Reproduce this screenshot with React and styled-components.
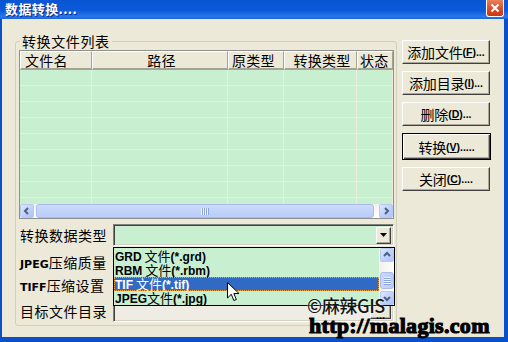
import React from 'react'
import styled, { createGlobalStyle, css } from 'styled-components'

// --------------- globals -------------------
const GlobalStyle = createGlobalStyle`
  html, body { margin: 0; padding: 0; }
  body {
    width: 508px;
    height: 342px;
    overflow: hidden;
    background: #0B50CE;
    font-family: "Noto Sans CJK SC", "Liberation Sans", sans-serif;
  }
  * { box-sizing: border-box; }
`

const COLS = '72px 136px 56px 73px 1fr'

// --------------- window frame -------------------
const Win = styled.div`
  position: relative;
  width: 508px;
  height: 342px;
  display: flex;
  flex-direction: column;
  background: #0B4FCB;
`

const TitleBar = styled.div`
  height: 19px;
  flex: none;
  display: flex;
  justify-content: space-between;
  align-items: flex-start;
  padding: 0 4px 0 5px;
  background: linear-gradient(to bottom, #0A55D4 0%, #0B5ADA 55%, #2B77E8 88%, #1862E0 100%);
`

const Title = styled.div`
  color: #fff;
  font-size: 13px;
  font-weight: bold;
  line-height: 18px;
  letter-spacing: 0.4px;
  text-shadow: 1px 1px 0 #0A2A8C;
`

const CloseBtn = styled.div`
  width: 18px;
  height: 17px;
  border: 1px solid #fff;
  border-top: none;
  border-radius: 0 0 3px 3px;
  background: linear-gradient(to bottom, #EA815F, #D9491F 60%, #C93A14);
  display: flex;
  align-items: center;
  justify-content: center;
`

const Frame = styled.div`
  flex: 1;
  display: flex;
  padding: 0 4px 5px 2px;
`

const Client = styled.div`
  flex: 1;
  background: #ECE9D8;
  display: grid;
  grid-template-columns: 382px 90px;
  column-gap: 5px;
  align-items: start;
  padding: 14px 0 0 13px;
`

// --------------- group box -------------------
const GroupBox = styled.div`
  position: relative;
  margin-top: 8px;
  height: 285px;
  border: 1px solid #D0D0BF;
  border-radius: 3px;
  padding: 8px 2px 0 3px;
`

const Legend = styled.span`
  position: absolute;
  top: -10px;
  left: 4px;
  padding: 0 2px;
  background: #ECE9D8;
  font-size: 14px;
  line-height: 18px;
  letter-spacing: 0.6px;
  color: #000;
`

// --------------- list view -------------------
const ListView = styled.div`
  height: 169px;
  border: 1px solid #8E8F8F;
  display: flex;
  flex-direction: column;
  background: #C8F0D0;
`

const HeaderRow = styled.div`
  display: grid;
  grid-template-columns: ${COLS};
  height: 19px;
  flex: none;
`

const HeaderCell = styled.div`
  background: #ECE9D8;
  border-top: 1px solid #fff;
  border-left: 1px solid #fff;
  border-right: 1px solid #A5A294;
  border-bottom: 2px solid #A5A294;
  font-size: 14px;
  line-height: 16px;
  letter-spacing: 0.3px;
  padding-left: ${p => p.$pad || 3}px;
  text-align: ${p => p.$center ? 'center' : 'left'};
  white-space: nowrap;
`

const Body = styled.div`
  flex: 1;
  overflow: hidden;
`

const Row = styled.div`
  display: grid;
  grid-template-columns: ${COLS};
  height: 16px;
`

const Cell = styled.div`
  border-right: 1px solid #EEECDC;
  border-bottom: 1px solid #EEECDC;
`

// --------------- xp scrollbars -------------------
const HScroll = styled.div`
  height: 14px;
  flex: none;
  display: flex;
  background: linear-gradient(to bottom, #F3F1EC, #FEFEFB);
`

const VScroll = styled.div`
  width: 15px;
  display: flex;
  flex-direction: column;
  background: linear-gradient(to right, #F3F1EC, #FEFEFB);
  border-left: 1px solid #F5F4EC;
`

const ArrowBtn = styled.div`
  width: 14px;
  height: 14px;
  flex: none;
  margin-top: ${p => p.$end ? 'auto' : '0'};
  border: 1px solid #B7C9F5;
  border-radius: 2px;
  background: linear-gradient(135deg, #DDE7FE, #BCCFFA 60%, #AFC4F6);
  display: flex;
  align-items: center;
  justify-content: center;
`

const Thumb = styled.div`
  flex: ${p => p.$vertical ? 'none' : '1'};
  height: ${p => p.$vertical ? '17px' : 'auto'};
  margin: ${p => p.$vertical ? '10px 0 0 0' : '0 5px 0 2px'};
  border: 1px solid #A9BCEC;
  border-radius: 3px;
  background: ${p => p.$vertical
    ? 'linear-gradient(to right, #C9D8FD, #BCCEF9)'
    : 'linear-gradient(to bottom, #CCDBFD, #BACCF8)'};
  display: flex;
  align-items: center;
  justify-content: center;
`

const Grip = styled.div`
  width: ${p => p.$vertical ? '7px' : '8px'};
  height: ${p => p.$vertical ? '8px' : '7px'};
  background: repeating-linear-gradient(
    ${p => p.$vertical ? 'to bottom' : 'to right'},
    #EEF4FE 0, #EEF4FE 1px, #8CA5DD 1px, #8CA5DD 2px
  );
`

const Chevron = ({ dir }) => {
  const pts = {
    left: '5,1 2,4 5,7',
    right: '3,1 6,4 3,7',
    up: '1,5 4,2 7,5',
    down: '1,3 4,6 7,3',
  }[dir]
  return (
    <svg width="8" height="8" viewBox="0 0 8 8">
      <polyline points={pts} fill="none" stroke="#4D6185" strokeWidth="2" />
    </svg>
  )
}

// --------------- lower form -------------------
const FormArea = styled.div`
  position: relative;
  margin-top: 5px;
`

const FormRow = styled.div`
  display: grid;
  grid-template-columns: 94px 1fr;
  align-items: center;
  height: 22px;
  margin-top: ${p => p.$mt || 0}px;
`

const Label = styled.div`
  font-size: 14px;
  letter-spacing: 0.5px;
  padding-left: 1px;
  white-space: nowrap;
  color: #000;

  b {
    font-family: "DejaVu Sans", sans-serif;
    font-size: 11px;
    letter-spacing: 0;
  }
`

const Sunken = css`
  border: 1px solid;
  border-color: #808080 #fff #fff #808080;
  box-shadow: inset 1px 1px #404040, inset -1px -1px #D4D0C8;
`

const Combo = styled.div`
  ${Sunken}
  height: 22px;
  background: #C8F0D0;
  display: flex;
  justify-content: flex-end;
  align-items: center;
  padding-right: 2px;
`

const TextBox = styled.div`
  ${Sunken}
  height: 22px;
  background: #EFEDE3;
  display: flex;
  justify-content: flex-end;
  align-items: stretch;
  padding: 2px;
`

const Raised = css`
  background: #ECE9D8;
  border: 1px solid;
  border-color: #fff #404040 #404040 #fff;
  box-shadow: inset -1px -1px #ACA899;
`

const DropBtn = styled.div`
  ${Raised}
  width: 15px;
  height: 17px;
  display: flex;
  align-items: center;
  justify-content: center;
`

const DotsBtn = styled.div`
  ${Raised}
  width: 21px;
  font-size: 11px;
  font-family: "Liberation Sans", sans-serif;
  font-weight: bold;
  line-height: 22px;
  text-align: center;
`

const DropList = styled.div`
  position: absolute;
  top: 23px;
  left: 94px;
  width: 282px;
  height: 59px;
  border: 1px solid #000;
  background: #C8F0D0;
  display: flex;
  z-index: 2;
`

const Items = styled.div`
  flex: 1;
  padding-top: 1px;
`

const Item = styled.div`
  height: 14px;
  line-height: 14px;
  font-size: 13px;
  padding-left: 1px;
  white-space: nowrap;
  color: #000;

  b {
    font-family: "Liberation Sans", sans-serif;
    font-size: 12px;
    letter-spacing: 0;
  }

  ${p => p.$selected && css`
    background: #316AC5;
    color: #fff;
    outline: 1px dotted #F0A040;
    outline-offset: -1px;
  `}
`

// --------------- buttons on the right -------------------
const ButtonCol = styled.div`
  display: flex;
  flex-direction: column;
  gap: 7px;
  margin-top: 7px;
`

const Btn = styled.div`
  ${Raised}
  width: 88px;
  height: 24px;
  display: flex;
  align-items: center;
  justify-content: center;
  font-size: 14px;
  letter-spacing: -0.2px;
  color: #000;
  white-space: nowrap;

  small {
    font-family: "Liberation Sans", sans-serif;
    font-weight: bold;
    font-size: 10.5px;
    letter-spacing: 0;
  }

  ${p => p.$focused && css`
    width: 89px;
    height: 27px;
    border: 1px solid #000;
    box-shadow: inset 1px 1px #fff, inset -1px -1px #404040, inset -2px -2px #ACA899;
  `}
`

// --------------- overlays -------------------
const Watermark = styled.div`
  position: absolute;
  left: 307px;
  top: 294px;
  display: flex;
  flex-direction: column;
  z-index: 5;
`

const Copy = styled.div`
  font-family: "Noto Sans CJK SC", "Liberation Sans", sans-serif;
  font-size: 18px;
  font-weight: 500;
  line-height: 22px;
  color: #141414;
  text-shadow: 0 0 2px #fff;
  letter-spacing: -0.4px;
`

const Url = styled.div`
  font-family: "Liberation Serif", serif;
  font-weight: bold;
  font-size: 22px;
  line-height: 20px;
  letter-spacing: 0.3px;
  color: #000;
  -webkit-text-stroke: 1.1px #000;
  margin-left: 2px;
`

const Cursor = styled.svg`
  position: absolute;
  left: 227px;
  top: 282px;
  z-index: 6;
`

const columns = [
  { t: '文件名', pad: 4 },
  { t: '路径', center: true },
  { t: '原类型', pad: 3 },
  { t: '转换类型', center: true },
  { t: '状态', pad: 2 },
]

const actions = [
  { t: '添加文件', k: 'F', tail: ')...' },
  { t: '添加目录', k: 'I', tail: ')...' },
  { t: '删除', k: 'D', tail: ')...' },
  { t: '转换', k: 'V', tail: ').....', focused: true },
  { t: '关闭', k: 'C', tail: ')....' },
]

const types = [
  { n: 'GRD', sp: ' ', e: 'grd' },
  { n: 'RBM', sp: ' ', e: 'rbm' },
  { n: 'TIF', sp: ' ', e: 'tif', selected: true },
  { n: 'JPEG', sp: '', e: 'jpg' },
]

const App = () => {
  return (
    <Win>
      <GlobalStyle />
      <TitleBar>
        <Title>数据转换....</Title>
        <CloseBtn>
          <svg width="10" height="10" viewBox="0 0 10 10">
            <path d="M1.5 1.5 L8.5 8.5 M8.5 1.5 L1.5 8.5" stroke="#fff" strokeWidth="2" />
          </svg>
        </CloseBtn>
      </TitleBar>

      <Frame>
        <Client>
          <GroupBox>
            <Legend>转换文件列表</Legend>
            <ListView>
              <HeaderRow>
                {columns.map(c => (
                  <HeaderCell key={c.t} $pad={c.pad} $center={c.center}>{c.t}</HeaderCell>
                ))}
              </HeaderRow>
              <Body>
                {Array.from({ length: 9 }).map((_, i) => (
                  <Row key={i}>
                    {columns.map(c => <Cell key={c.t} />)}
                  </Row>
                ))}
              </Body>
              <HScroll>
                <ArrowBtn><Chevron dir="left" /></ArrowBtn>
                <Thumb><Grip /></Thumb>
                <ArrowBtn><Chevron dir="right" /></ArrowBtn>
              </HScroll>
            </ListView>

            <FormArea>
              <FormRow>
                <Label>转换数据类型</Label>
                <Combo>
                  <DropBtn>
                    <svg width="7" height="4" viewBox="0 0 7 4">
                      <polygon points="0,0 7,0 3.5,4" fill="#000" />
                    </svg>
                  </DropBtn>
                </Combo>
              </FormRow>
              <FormRow $mt={5}>
                <Label><b>JPEG</b>压缩质量</Label>
                <Combo />
              </FormRow>
              <FormRow $mt={1}>
                <Label><b>TIFF</b>压缩设置</Label>
                <Combo />
              </FormRow>
              <FormRow $mt={4}>
                <Label>目标文件目录</Label>
                <TextBox>
                  <DotsBtn>...</DotsBtn>
                </TextBox>
              </FormRow>

              <DropList>
                <Items>
                  {types.map(t => (
                    <Item key={t.n} $selected={t.selected}>
                      <b>{t.n}</b>{t.sp}文件<b>(*.{t.e})</b>
                    </Item>
                  ))}
                </Items>
                <VScroll>
                  <ArrowBtn><Chevron dir="up" /></ArrowBtn>
                  <Thumb $vertical><Grip $vertical /></Thumb>
                  <ArrowBtn $end><Chevron dir="down" /></ArrowBtn>
                </VScroll>
              </DropList>
            </FormArea>
          </GroupBox>

          <ButtonCol>
            {actions.map(a => (
              <Btn key={a.k} $focused={a.focused}>
                {a.t}<small>(<u>{a.k}</u>{a.tail}</small>
              </Btn>
            ))}
          </ButtonCol>
        </Client>
      </Frame>

      <Watermark>
        <Copy>©麻辣GIS</Copy>
        <Url>http://malagis.com</Url>
      </Watermark>

      <Cursor width="13" height="20" viewBox="0 0 13 20">
        <path d="M0.5 0.5 L0.5 16 L4.3 12.3 L6.8 18.5 L9.3 17.5 L6.9 11.5 L12 11.5 Z"
          fill="#fff" stroke="#000" strokeWidth="1" strokeLinejoin="miter" />
      </Cursor>
    </Win>
  )
}

export default App
